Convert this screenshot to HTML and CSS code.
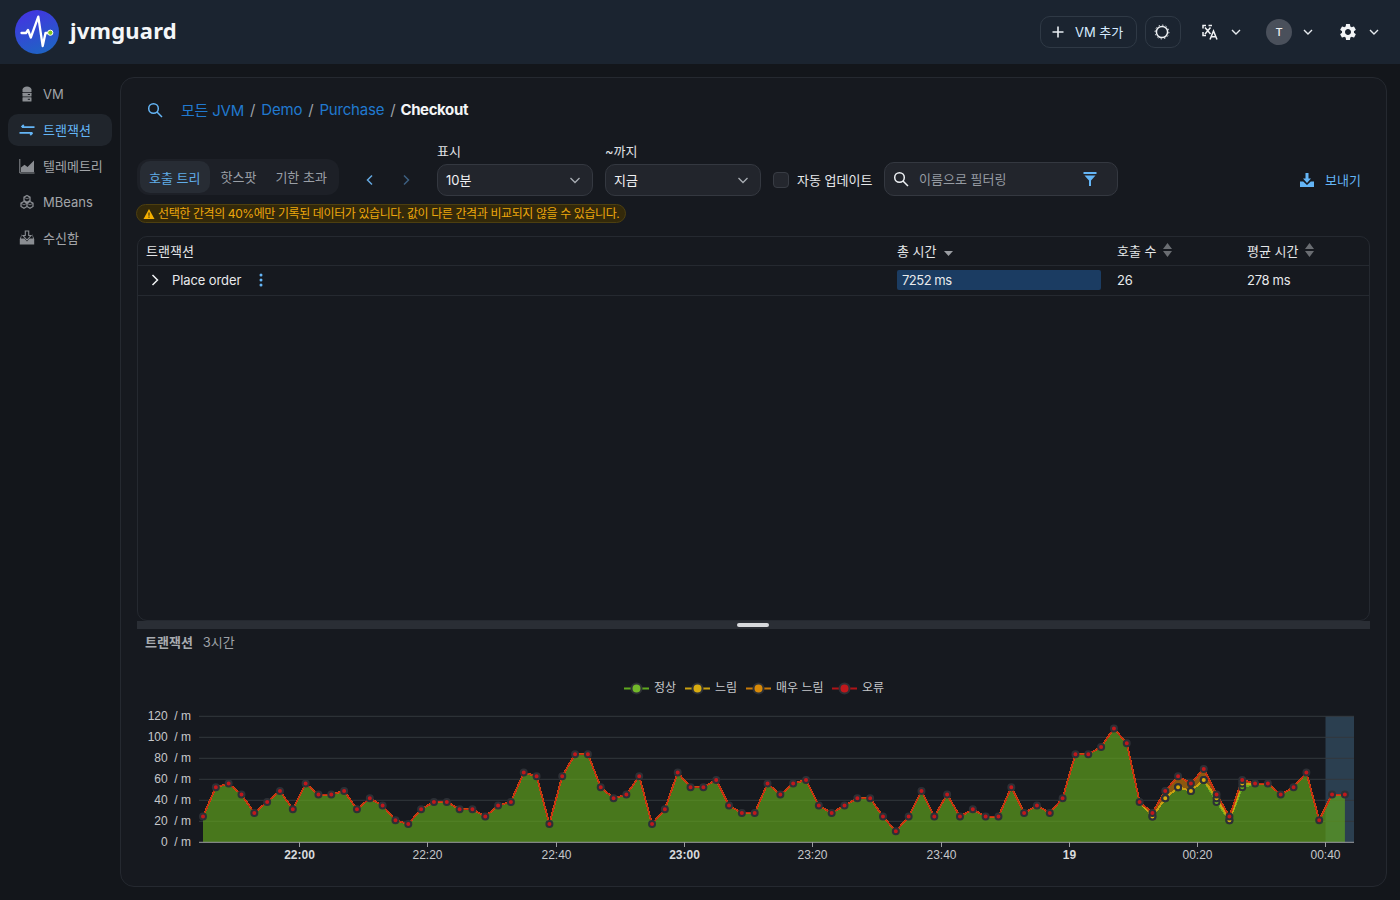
FILE: index.html
```html
<!DOCTYPE html>
<html lang="ko">
<head>
<meta charset="utf-8">
<title>jvmguard</title>
<link rel="stylesheet" href="styles.css">
</head>
<body>
<header class="topbar">
  <div class="brand">
    <svg class="logo" viewBox="0 0 44 44" width="44" height="44">
      <defs><linearGradient id="lg" x1="0.2" y1="0" x2="0.6" y2="1"><stop offset="0" stop-color="#4433e2"/><stop offset="1" stop-color="#1f63c4"/></linearGradient></defs>
      <circle cx="22" cy="22" r="22" fill="url(#lg)"/>
      <path d="M6.500 23h4.500l2-3 2.800 7.500L23.300 6.700 27.700 36l2.800-13h3" fill="none" stroke="#fff" stroke-width="2.300" stroke-linejoin="round" stroke-linecap="round"/>
      <circle cx="35.300" cy="22.700" r="2.600" fill="#7ec81e" stroke="#fff" stroke-width="1"/>
    </svg>
    <span class="brand-name">jvmguard</span>
  </div>
  <div class="top-actions">
    <button class="top-btn add-btn">
      <svg width="14" height="14" viewBox="0 0 14 14"><path d="M7 1.5v11M1.5 7h11" stroke="#e8edf2" stroke-width="1.6" fill="none"/></svg>
      <span>VM 추가</span>
    </button>
    <button class="top-btn sun-btn">
      <svg width="16" height="16" viewBox="0 0 16 16"><circle cx="8" cy="8" r="5.6" fill="none" stroke="#eef1f4" stroke-width="1.5"/><circle cx="8" cy="8" r="6.9" fill="none" stroke="#eef1f4" stroke-width="1" stroke-dasharray="1.4 2.2"/></svg>
    </button>
    <div class="menu lang">
      <svg width="16" height="16" viewBox="0 0 16 16" fill="none" stroke="#f2f4f6" stroke-width="1.500"><path d="M1 4.500V1.500h3M6.500 1.500H10M1 8v3.500h3M3 3.500l5.500 6.500M8.500 3.500L3 10"/><path d="M8 15.500l3.500-8.500 3.500 8.500M9.200 12.800h4.600"/></svg>
      <svg class="chev" width="12" height="12" viewBox="0 0 12 12"><path d="M2 4l4 4 4-4" fill="none" stroke="#e6eaee" stroke-width="1.4"/></svg>
    </div>
    <div class="menu user">
      <span class="avatar">T</span>
      <svg class="chev" width="12" height="12" viewBox="0 0 12 12"><path d="M2 4l4 4 4-4" fill="none" stroke="#e6eaee" stroke-width="1.4"/></svg>
    </div>
    <div class="menu gear">
      <svg width="20" height="20" viewBox="0 0 24 24"><path fill="#f2f4f6" d="M19.14 12.94c.04-.3.06-.61.06-.94 0-.32-.02-.64-.07-.94l2.03-1.58a.49.49 0 0 0 .12-.61l-1.92-3.32a.488.488 0 0 0-.59-.22l-2.39.96c-.5-.38-1.03-.7-1.62-.94l-.36-2.54a.484.484 0 0 0-.48-.41h-3.84c-.24 0-.43.17-.47.41l-.36 2.54c-.59.24-1.13.57-1.62.94l-2.39-.96c-.22-.08-.47 0-.59.22L2.74 8.87c-.12.21-.08.47.12.61l2.03 1.58c-.05.3-.09.63-.09.94s.02.64.07.94l-2.03 1.58a.49.49 0 0 0-.12.61l1.92 3.32c.12.22.37.29.59.22l2.39-.96c.5.38 1.03.7 1.62.94l.36 2.54c.05.24.24.41.48.41h3.84c.24 0 .44-.17.47-.41l.36-2.54c.59-.24 1.13-.56 1.62-.94l2.39.96c.22.08.47 0 .59-.22l1.92-3.32c.12-.22.07-.47-.12-.61l-2.01-1.58zM12 15.6c-1.98 0-3.6-1.62-3.6-3.6s1.62-3.6 3.6-3.6 3.6 1.62 3.6 3.6-1.62 3.6-3.6 3.6z"/></svg>
      <svg class="chev" width="12" height="12" viewBox="0 0 12 12"><path d="M2 4l4 4 4-4" fill="none" stroke="#e6eaee" stroke-width="1.4"/></svg>
    </div>
  </div>
</header>

<div class="layout">
  <nav class="sidebar">
    <a class="nav-item">
      <svg width="16" height="16" viewBox="0 0 16 16" fill="#8a8d92"><path d="M3.500 3.500C3.500 2 5.500 .500 8 .500s4.500 1.500 4.500 3V6h-9z"/><rect x="3.500" y="6.800" width="9" height="3.600" rx=".5"/><rect x="3.500" y="11.200" width="9" height="4.300" rx=".5"/><rect x="8.800" y="8" width="2.200" height="1" fill="#1c1f24"/><rect x="8.800" y="12.800" width="2.200" height="1" fill="#1c1f24"/></svg>
      <span>VM</span>
    </a>
    <a class="nav-item active">
      <svg width="16" height="16" viewBox="0 0 16 16" fill="none" stroke="#64b5f6" stroke-width="1.800"><path d="M3 5.200h12.500M4.800 3L2.500 5.200M.500 10.800h13M11.200 13l2.300-2.200"/></svg>
      <span class="ko">트랜잭션</span>
    </a>
    <a class="nav-item">
      <svg width="16" height="16" viewBox="0 0 16 16"><path d="M.8 1v14h14.700" fill="none" stroke="#8a8d92" stroke-width="1"/><path d="M2 14V9.500l3.500-2.700L8.500 9 15 2.500V14z" fill="#8a8d92"/></svg>
      <span class="ko">텔레메트리</span>
    </a>
    <a class="nav-item">
      <svg width="16" height="16" viewBox="0 0 16 16" fill="none" stroke="#8a8d92" stroke-width="1.300"><path d="M8 1.500l3 1.700v3.300L8 8.200 5 6.500V3.200zM5 7.500l3 1.700v3.300l-3 1.800-3-1.800V9.200zM11 7.500l3 1.700v3.300l-3 1.800-3-1.800V9.200z"/><path d="M2 9.200l3 1.700 3-1.700M8 9.200l3 1.700 3-1.700M5 3.200l3 1.700 3-1.700" stroke-width=".8"/></svg>
      <span>MBeans</span>
    </a>
    <a class="nav-item">
      <svg width="16" height="16" viewBox="0 0 16 16"><path d="M6.300 1h3.400v4.500h2.300L8 10 4 5.500h2.300z" fill="none" stroke="#8a8d92" stroke-width="1.100"/><path d="M3 3.500L.8 9v5.500h14.400V9L13 3.500 14 8.500h-3.500L8 11.500 5.500 8.500H2z" fill="#8a8d92"/></svg>
      <span class="ko">수신함</span>
    </a>
  </nav>

  <main class="card">
    <div class="crumbs">
      <svg class="crumb-search" width="16" height="16" viewBox="0 0 16 16" fill="none" stroke="#64b5f6" stroke-width="1.500"><circle cx="6.500" cy="6.500" r="4.800"/><path d="M10 10l5 5"/></svg>
      <a class="crumb">모든 JVM</a><span class="sep">/</span>
      <a class="crumb">Demo</a><span class="sep">/</span>
      <a class="crumb">Purchase</a><span class="sep last">/</span>
      <strong class="crumb-now">Checkout</strong>
    </div>

    <div class="toolbar">
      <div class="tabs">
        <span class="tab active">호출 트리</span>
        <span class="tab">핫스팟</span>
        <span class="tab">기한 초과</span>
      </div>
      <div class="pager">
        <svg width="12" height="12" viewBox="0 0 12 12"><path d="M8 1.500L3.500 6 8 10.500" fill="none" stroke="#64a8e0" stroke-width="1.500"/></svg>
        <svg width="12" height="12" viewBox="0 0 12 12"><path d="M4 1.500L8.500 6 4 10.500" fill="none" stroke="#3c5f80" stroke-width="1.500"/></svg>
      </div>
      <label class="field">
        <span class="field-label">표시</span>
        <span class="select"><span class="lift">10분</span><svg width="12" height="12" viewBox="0 0 12 12"><path d="M1.500 4l4.500 4.500L10.500 4" fill="none" stroke="#a8adb3" stroke-width="1.300"/></svg></span>
      </label>
      <label class="field">
        <span class="field-label">~까지</span>
        <span class="select"><span class="lift">지금</span><svg width="12" height="12" viewBox="0 0 12 12"><path d="M1.500 4l4.500 4.500L10.500 4" fill="none" stroke="#a8adb3" stroke-width="1.300"/></svg></span>
      </label>
      <div class="auto"><span class="check"></span><span class="lift">자동 업데이트</span></div>
      <div class="filter">
        <svg width="16" height="16" viewBox="0 0 16 16" fill="none" stroke="#eef1f4" stroke-width="1.500"><circle cx="6.500" cy="6.500" r="4.800"/><path d="M10 10l5 5"/></svg>
        <span class="placeholder lift">이름으로 필터링</span>
        <svg class="funnel" width="16" height="16" viewBox="0 0 16 16"><path d="M1.500 1h13v2h-13zM2.500 4.500h11L9 9.500V15H7V9.500z" fill="#64b5f6"/></svg>
      </div>
      <a class="export">
        <svg width="16" height="16" viewBox="0 0 16 16" fill="#64b5f6"><path d="M6.500 1h3v5.500H12L8 11 4 6.500h2.500z"/><path d="M1 9.500h3.200L8 13l3.800-3.500H15V15H1z"/></svg>
        <span class="lift">보내기</span>
      </a>
    </div>

    <div class="alert">
      <svg width="12" height="12" viewBox="0 0 12 12"><path d="M6 1l5.500 10H.5z" fill="#f5b000"/><path d="M6 4.500v3.200M6 8.500v1.200" stroke="#3a2f08" stroke-width="1.100"/></svg>
      <span class="lift">선택한 간격의 40%에만 기록된 데이터가 있습니다. 값이 다른 간격과 비교되지 않을 수 있습니다.</span>
    </div>

    <section class="table">
      <div class="row head">
        <div class="cell">트랜잭션</div>
        <div class="cell">총 시간 <svg class="sort-one" width="9" height="5" viewBox="0 0 9 6" preserveAspectRatio="none"><path d="M0 0h9L4.500 6z" fill="#9a9da2"/></svg></div>
        <div class="cell">호출 수 <svg class="sort" width="9" height="14" viewBox="0 0 9 14"><path d="M4.500 0L9 6H0zM0 8h9l-4.500 6z" fill="#6a6d72"/></svg></div>
        <div class="cell">평균 시간 <svg class="sort" width="9" height="14" viewBox="0 0 9 14"><path d="M4.500 0L9 6H0zM0 8h9l-4.500 6z" fill="#6a6d72"/></svg></div>
      </div>
      <div class="row body">
        <div class="cell name">
          <svg width="10" height="12" viewBox="0 0 10 12"><path d="M2.500 1l5 5-5 5" fill="none" stroke="#f0f2f4" stroke-width="1.500"/></svg>
          <span class="tight">Place order</span>
          <svg class="kebab" width="4" height="14" viewBox="0 0 4 14" fill="#64b5f6"><circle cx="2" cy="2" r="1.500"/><circle cx="2" cy="7" r="1.500"/><circle cx="2" cy="12" r="1.500"/></svg>
        </div>
        <div class="cell"><div class="bar">7252 ms</div></div>
        <div class="cell num">26</div>
        <div class="cell num">278 ms</div>
      </div>
    </section>

    <div class="splitter"><span class="handle"></span></div>

    <div class="chart-title"><strong>트랜잭션</strong><span>3시간</span></div>
    <svg id="chart" class="chart" viewBox="137 670 1233 200" width="1233" height="200"></svg>
  </main>
</div>
<script src="chart.js"></script>
</body>
</html>
```
FILE: styles.css
```css
* { box-sizing: border-box; }
html, body { margin: 0; height: 100%; }
body {
  width: 1400px; height: 900px; overflow: hidden;
  background: #13161b; color: #e6e8ea;
  font-family: Inter, "Noto Sans CJK KR", sans-serif;
  font-size: 13px;
}
.lift { margin-top: -2px; }
.topbar {
  height: 64px; background: #1b2430;
  display: flex; align-items: center; justify-content: space-between;
  padding: 0 20px 0 15px;
}
.brand { display: flex; align-items: center; gap: 11px; }
.logo { display: block; }
.brand-name { font-family: "Noto Sans", sans-serif; font-weight: 700; font-size: 22px; color: #f4f6f8; letter-spacing: .2px; margin-top: -4px; }
.top-actions { display: flex; align-items: center; }
.top-btn {
  height: 32px; background: transparent; border: 1px solid #2f3945; border-radius: 10px;
  color: #d6ebff; font: inherit; display: flex; align-items: center; justify-content: center; padding: 0;
}
.add-btn { width: 97px; gap: 10px; justify-content: flex-start; padding-left: 10px; }
.add-btn span { margin-top: -2px; }
.sun-btn { width: 36px; margin-left: 8px; padding-right: 2px; }
.menu { display: flex; align-items: center; }
.chev { display: block; }
.lang { margin-left: 21px; gap: 12px; }
.user { margin-left: 24px; gap: 10px; }
.gear { margin-left: 24px; gap: 10px; }
.avatar {
  width: 26px; height: 26px; border-radius: 50%; background: #4a505b; color: #f0f2f4;
  display: flex; align-items: center; justify-content: center; font-size: 11px; font-weight: 500;
}
.layout { display: flex; height: 836px; }
.sidebar { width: 120px; flex: none; padding: 14px 8px 0; display: flex; flex-direction: column; gap: 4px; }
.nav-item {
  height: 32px; border-radius: 10px; display: flex; align-items: center; gap: 8px; padding-left: 11px;
  color: #a2a5a9; font-size: 13px;
}
.nav-item .ko { margin-top: -2px; }
.nav-item.active { background: #20252c; color: #64b5f6; }
.card {
  width: 1267px; height: 810px; margin-top: 13px; flex: none;
  background: #16191f; border: 1px solid #252930; border-radius: 14px;
  padding: 0 16px;
}
.crumbs { display: flex; align-items: center; height: 20px; margin-top: 22px; padding-left: 10px; font-size: 15px; letter-spacing: -.2px; }
.crumbs a, .crumbs span, .crumbs strong { margin-top: -2px; }
.crumb-search { margin-right: 18px; }
.crumb { color: #2179cf; }
.sep { color: #9ea2a8; margin: 0 6px; }
.sep.last { margin-right: 5px; }
.crumb-now { color: #f4f5f6; font-weight: 700; letter-spacing: -.38px; }
.toolbar { display: flex; align-items: flex-end; height: 53px; margin-top: 23px; padding-right: 9px; }
.tabs { display: flex; height: 36px; width: 202px; background: #1d2027; border-radius: 12px; padding: 2px 3px; margin-bottom: 1px; align-items: stretch; }
.tab { color: #9a9fa6; display: flex; align-items: center; padding: 0 9px; border-radius: 10px; font-size: 13px; margin-top: -1px; white-space: nowrap; }
.tab + .tab { padding: 0 9px 0 11px; }
.tab:last-child { padding: 0 0 0 10px; }
.tab.active { background: #272c34; color: #60ace8; margin-top: 0; }
.pager { display: flex; width: 98px; gap: 24px; padding: 0 0 10px 25px; }
.field { display: flex; flex-direction: column; width: 156px; margin-right: 12px; }
.field-label { font-size: 13px; color: #e0e2e5; line-height: 16px; margin-bottom: 5px; }
.select {
  height: 32px; background: #22252c; border: 1px solid #343840; border-radius: 10px;
  display: flex; align-items: center; justify-content: space-between; padding: 0 11px 0 8px;
  color: #f0f1f3; font-size: 13px;
}
.auto { display: flex; align-items: center; gap: 8px; height: 32px; width: 111px; white-space: nowrap; }
.check { width: 16px; height: 16px; background: #24272e; border: 1px solid #383c44; border-radius: 4px; }
.filter {
  width: 234px; height: 34px; background: #22252c; border: 1px solid #343840; border-radius: 10px;
  display: flex; align-items: center; padding: 0 19px 0 8px; gap: 10px;
}
.placeholder { color: #969ba2; flex: 1; }
.export { margin-left: auto; display: flex; align-items: center; gap: 10px; color: #64b5f6; height: 32px; }
.alert {
  display: flex; align-items: center; gap: 3px; width: 490px; height: 19px; margin: 8px 0 0 -1px; padding: 0 0 0 6px;
  background: #33290a; border: 1px solid #4d3f10; border-radius: 10px; color: #eda70c; font-size: 12px; letter-spacing: -.4px; white-space: nowrap;
}
.table { height: 385px; margin-top: 13px; border: 1px solid #252930; border-radius: 10px; }
.row { display: grid; grid-template-columns: 751px 220px 130px 1fr; align-items: center; }
.head { height: 29px; padding-bottom: 2px; border-bottom: 1px solid #252930; font-size: 13px; color: #e4e6e8; }
.body { height: 30px; padding-bottom: 2px; border-bottom: 1px solid #252930; font-size: 13px; color: #e8eaec; }
.cell { padding: 0 8px; display: flex; align-items: center; }
.sort { margin-left: 6px; }
.sort-one { margin-left: 7px; margin-top: 6px; }
.name { gap: 12px; padding-left: 12px; }
.tight { letter-spacing: -.1px; }
.num { letter-spacing: -.3px; }
.kebab { margin-left: 6px; }
.bar { width: 204px; height: 20px; background: #1b3c62; border-radius: 2px; padding-left: 5px; line-height: 20px; letter-spacing: -.5px; }
.splitter { height: 8px; background: #2a2e35; display: flex; align-items: center; justify-content: center; padding-right: 2px; }
.handle { width: 32px; height: 4px; background: #d8dadd; border-radius: 2px; }
.chart-title { display: flex; gap: 10px; margin-top: 3px; height: 18px; padding-left: 8px; align-items: center; font-size: 13px; color: #9ea2a8; }
.chart-title strong { color: #a8abb0; font-weight: 700; }
.chart { display: block; margin-top: 20px; font-family: "Liberation Sans", "Noto Sans CJK KR", sans-serif; }
.chart text { white-space: pre; }
```
FILE: chart.js
```js
(function () {
  var NS = 'http://www.w3.org/2000/svg';
  var svg = document.getElementById('chart');
  function el(name, attrs, text) {
    var e = document.createElementNS(NS, name);
    for (var k in attrs) e.setAttribute(k, attrs[k]);
    if (text !== undefined) e.textContent = text;
    svg.appendChild(e);
    return e;
  }
  var top = [7,15,16,13,8,11,14,9,16,13,13,14,9,12,10,6,5,9,11,11,9,9,7,10,11,19,18,5,18,
    24,24,15,12,13,18,5,9,19,15,15,17,10,8,8,16,13,16,17,10,8,10,12,12,7,3,7,14,7,13,7,9,
    7,7,15,8,10,8,12,24,24,26,31,27,11,8,14,18,16,20,13,7,17,16,16,13,15,19,6,13,13];
  var green = top.slice(), yellow = top.slice();
  var over = {74:[7,7],75:[12,12],76:[15,15],77:[14,14],78:[17,17],79:[11,12],80:[6,6],81:[15,16]};
  for (var i in over) { green[i] = over[i][0]; yellow[i] = over[i][1]; }
  var base = 842.3, unit = 3.67;
  function X(i) { return 203 + i * 12.83; }
  function Y(n) { return base - n * unit; }
  function line(a) { return a.map(function (n, i) { return X(i).toFixed(1) + ',' + Y(n).toFixed(1); }); }

  // highlighted current interval, behind everything
  el('rect', { x: 1325.5, y: 716, width: 28.5, height: 126.3, fill: '#2b3f50' });

  // grid and axis labels
  for (var g = 0; g <= 6; g++) {
    var y = 842.3 - g * 21;
    if (g) el('line', { x1: 199, x2: 1354, y1: y, y2: y, stroke: '#33373d', 'stroke-width': 1 });
    el('text', { x: 191, y: y + 3.5, 'text-anchor': 'end', fill: '#c6c8cb', 'font-size': 12 }, (g * 20) + '  / m');
  }

  // stacked areas
  function band(upper, lower, fill, op) {
    var low = lower ? line(lower).reverse() : [X(89).toFixed(1) + ',' + base, X(0).toFixed(1) + ',' + base];
    el('polygon', { points: line(upper).concat(low).join(' '), fill: fill, 'fill-opacity': op });
  }
  band(green, null, '#62a81c', .66);
  band(yellow, green, '#c09a10', .7);
  band(top, yellow, '#c87a08', .66);

  // lines
  function stroke(a, c, w) {
    el('polyline', { points: line(a).join(' '), fill: 'none', stroke: c, 'stroke-width': w, 'stroke-linejoin': 'round', 'shape-rendering': 'crispEdges' });
  }
  stroke(green, '#6aae20', 2);
  stroke(yellow, '#c8a010', 2);
  stroke(top, '#cc4a0e', 2);
  stroke(top, '#c42a14', 1);

  // markers
  function dot(x, y, c) {
    el('circle', { cx: x, cy: y, r: 3, fill: c, stroke: '#2d3036', 'stroke-width': 2 });
  }
  top.forEach(function (n, i) {
    if (green[i] !== n) dot(X(i), Y(green[i]), '#64a820');
    if (yellow[i] !== n) dot(X(i), Y(yellow[i]), '#d8ac10');
    dot(X(i), Y(n), '#c0181c');
  });

  // x axis
  el('line', { x1: 199, x2: 1354, y1: 842.3, y2: 842.3, stroke: '#9a9c9f', 'stroke-width': 1 });
  var labels = [['22:00', 1], ['22:20'], ['22:40'], ['23:00', 1], ['23:20'], ['23:40'], ['19', 1], ['00:20'], ['00:40']];
  labels.forEach(function (l, i) {
    var x = Math.round(299 + i * 128.3) + .5;
    el('line', { x1: x, x2: x, y1: 842, y2: 847, stroke: '#9a9c9f', 'stroke-width': 1 });
    var a = { x: x, y: 859, 'text-anchor': 'middle', fill: '#c6c8cb', 'font-size': 12 };
    if (l[1]) { a['font-weight'] = 700; a.fill = '#d8dadc'; }
    el('text', a, l[0]);
  });

  // legend
  [[624, '정상', '#5fa81e', '#72b82a', 654], [685, '느림', '#c8a010', '#d8ac10', 715],
   [746, '매우 느림', '#c87a08', '#d88a08', 776], [832, '오류', '#b01418', '#c0181c', 862]].forEach(function (s) {
    el('line', { x1: s[0], x2: s[0] + 25, y1: 688.5, y2: 688.5, stroke: s[2], 'stroke-width': 2 });
    el('circle', { cx: s[0] + 12.5, cy: 688.5, r: 5, fill: s[3], stroke: '#2d3036', 'stroke-width': 2 });
    el('text', { x: s[4], y: 691.500, fill: '#c6c8cb', 'font-size': 12 }, s[1]);
  });
})();
```
